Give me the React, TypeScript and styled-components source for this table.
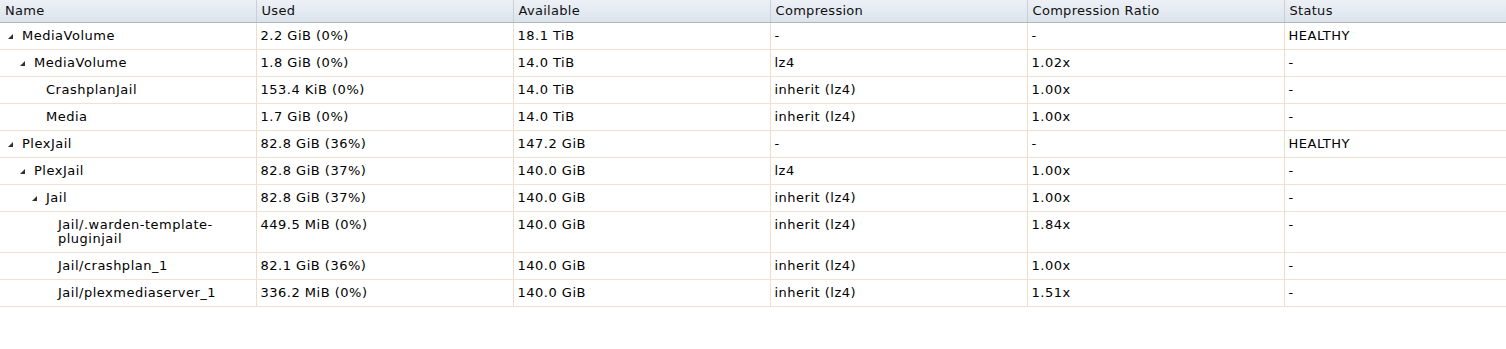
import React from 'react';
import styled, { createGlobalStyle } from 'styled-components';

interface Row {
	name: string;
	depth: number;
	expandable: boolean;
	used: string;
	available: string;
	compression: string;
	ratio: string;
	status: string;
}

const rows: Row[] = [
	{ name: 'MediaVolume', depth: 0, expandable: true, used: '2.2 GiB (0%)', available: '18.1 TiB', compression: '-', ratio: '-', status: 'HEALTHY' },
	{ name: 'MediaVolume', depth: 1, expandable: true, used: '1.8 GiB (0%)', available: '14.0 TiB', compression: 'lz4', ratio: '1.02x', status: '-' },
	{ name: 'CrashplanJail', depth: 2, expandable: false, used: '153.4 KiB (0%)', available: '14.0 TiB', compression: 'inherit (lz4)', ratio: '1.00x', status: '-' },
	{ name: 'Media', depth: 2, expandable: false, used: '1.7 GiB (0%)', available: '14.0 TiB', compression: 'inherit (lz4)', ratio: '1.00x', status: '-' },
	{ name: 'PlexJail', depth: 0, expandable: true, used: '82.8 GiB (36%)', available: '147.2 GiB', compression: '-', ratio: '-', status: 'HEALTHY' },
	{ name: 'PlexJail', depth: 1, expandable: true, used: '82.8 GiB (37%)', available: '140.0 GiB', compression: 'lz4', ratio: '1.00x', status: '-' },
	{ name: 'Jail', depth: 2, expandable: true, used: '82.8 GiB (37%)', available: '140.0 GiB', compression: 'inherit (lz4)', ratio: '1.00x', status: '-' },
	{ name: 'Jail/.warden-template-pluginjail', depth: 3, expandable: false, used: '449.5 MiB (0%)', available: '140.0 GiB', compression: 'inherit (lz4)', ratio: '1.84x', status: '-' },
	{ name: 'Jail/crashplan_1', depth: 3, expandable: false, used: '82.1 GiB (36%)', available: '140.0 GiB', compression: 'inherit (lz4)', ratio: '1.00x', status: '-' },
	{ name: 'Jail/plexmediaserver_1', depth: 3, expandable: false, used: '336.2 MiB (0%)', available: '140.0 GiB', compression: 'inherit (lz4)', ratio: '1.51x', status: '-' },
];

const columns = ['Name', 'Used', 'Available', 'Compression', 'Compression Ratio', 'Status'];

const App: React.FC = () => {
	return (
		<>
			<GlobalStyle />
			<Grid>
				<colgroup>
					<Col $w={256} />
					<Col $w={257} />
					<Col $w={257} />
					<Col $w={257} />
					<Col $w={257} />
					<col />
				</colgroup>
				<thead>
					<tr>
						{columns.map((c) => (
							<HeaderCell key={c}>{c}</HeaderCell>
						))}
					</tr>
				</thead>
				<tbody>
					{rows.map((r, i) => (
						<tr key={i}>
							<Cell>
								<NameWrap $depth={r.depth}>
									<Expander>{r.expandable && <Arrow />}</Expander>
									<NameText>{r.name}</NameText>
								</NameWrap>
							</Cell>
							<Cell>{r.used}</Cell>
							<Cell>{r.available}</Cell>
							<Cell>{r.compression}</Cell>
							<Cell>{r.ratio}</Cell>
							<Cell>{r.status}</Cell>
						</tr>
					))}
				</tbody>
			</Grid>
		</>
	);
};

const Arrow = () => (
	<svg width="5" height="5" viewBox="0 0 5 5">
		<polygon points="5,0 5,5 0,5" fill="#2f2f2f" />
	</svg>
);

const GlobalStyle = createGlobalStyle`
	body {
		margin: 0;
		background: #fff;
		font-family: 'DejaVu Sans', Verdana, sans-serif;
	}
`;

const Grid = styled.table`
	width: 1506px;
	table-layout: fixed;
	border-collapse: collapse;
	font-size: 13px;
	color: #000;
`;

const Col = styled.col<{ $w: number }>`
	width: ${(p) => p.$w}px;
`;

const HeaderCell = styled.th`
	height: 22px;
	padding: 0 4px 0 5px;
	text-align: left;
	font-weight: normal;
	line-height: 14px;
	letter-spacing: 0.3px;
	color: #101010;
	background: linear-gradient(#edf1f6, #dbe3ec);
	border-bottom: 1px solid #b1b6bc;
	border-left: 1px solid #c9d0d8;
	white-space: nowrap;
	&:first-child {
		border-left: none;
	}
`;

const Cell = styled.td`
	height: 14px;
	padding: 6px 4px;
	line-height: 14px;
	letter-spacing: 0.5px;
	vertical-align: top;
	border-bottom: 1px solid #f2e1d2;
	border-left: 1px solid #f0dccb;
	&:first-child {
		border-left: none;
		padding-left: 0;
	}
`;

const NameWrap = styled.div<{ $depth: number }>`
	display: flex;
	align-items: flex-start;
	padding-left: ${(p) => 8 + p.$depth * 12}px;
`;

const Expander = styled.span`
	flex: none;
	width: 14px;
	height: 14px;
	display: flex;
	align-items: center;
`;

const NameText = styled.span`
	min-width: 0;
`;

export default App;
